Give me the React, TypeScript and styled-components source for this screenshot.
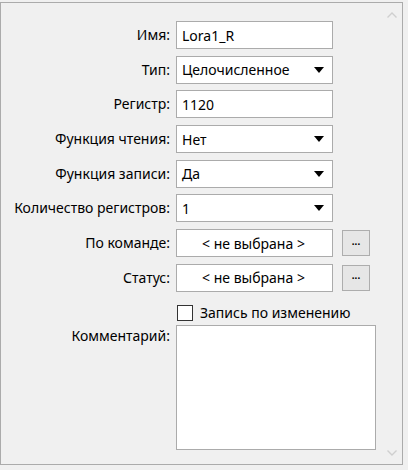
import React from 'react';
import styled, { createGlobalStyle } from 'styled-components';

const GlobalStyle = createGlobalStyle`
	html, body {
		margin: 0;
		padding: 0;
		background: #f0f0f0;
	}
	body {
		font-family: 'Noto Sans', 'Open Sans', sans-serif;
		font-size: 14px;
		color: #000;
	}
`;

type Row = {
	label: string;
	kind: 'text' | 'select' | 'picker';
	value: string;
};

const rows: Row[] = [
	{ label: 'Имя:', kind: 'text', value: 'Lora1_R' },
	{ label: 'Тип:', kind: 'select', value: 'Целочисленное' },
	{ label: 'Регистр:', kind: 'text', value: '1120' },
	{ label: 'Функция чтения:', kind: 'select', value: 'Нет' },
	{ label: 'Функция записи:', kind: 'select', value: 'Да' },
	{ label: 'Количество регистров:', kind: 'select', value: '1' },
	{ label: 'По команде:', kind: 'picker', value: '< не выбрана >' },
	{ label: 'Статус:', kind: 'picker', value: '< не выбрана >' },
];

const Chevron = ({ down }: { down?: boolean }) => (
	<svg width="10" height="6" viewBox="0 0 10 6">
		<path
			d={down ? 'M0.5 0.5 L5 5 L9.5 0.5' : 'M0.5 5.5 L5 1 L9.5 5.5'}
			fill="none"
			stroke="#cfcfcf"
			strokeWidth="1.4"
		/>
	</svg>
);

export default function App() {
	return (
		<>
			<GlobalStyle />
			<Panel>
				<ScrollUp>
					<Chevron />
				</ScrollUp>
				<Form>
					{rows.map((row) => (
						<React.Fragment key={row.label}>
							<Label>{row.label}</Label>
							<Field $centered={row.kind === 'picker'}>
								<span>{row.value}</span>
								{row.kind === 'select' && <Arrow />}
							</Field>
							{row.kind === 'picker' ? <DotsButton>...</DotsButton> : <span />}
						</React.Fragment>
					))}
					<span />
					<CheckRow>
						<Box />
						<span>Запись по изменению</span>
					</CheckRow>
					<CommentLabel>Комментарий:</CommentLabel>
					<Comment />
				</Form>
				<ScrollDown>
					<Chevron down />
				</ScrollDown>
			</Panel>
		</>
	);
}

const Panel = styled.div`
	position: relative;
	box-sizing: border-box;
	width: 403px;
	height: 463px;
	margin-top: 2px;
	border: 1px solid #ababab;
	background: #f0f0f0;
`;

const ScrollUp = styled.div`
	position: absolute;
	top: 9px;
	right: 5px;
	display: flex;
`;

const ScrollDown = styled.div`
	position: absolute;
	bottom: 8px;
	right: 5px;
	display: flex;
`;

const Form = styled.div`
	display: grid;
	grid-template-columns: 169px 157px 31px;
	grid-auto-rows: 28px;
	column-gap: 6px;
	row-gap: 6.7px;
	padding-top: 18px;
`;

const Label = styled.div`
	display: flex;
	align-items: center;
	justify-content: flex-end;
	white-space: nowrap;
	line-height: 1;
`;

const Field = styled.div<{ $centered?: boolean }>`
	box-sizing: border-box;
	display: flex;
	align-items: center;
	justify-content: ${(p) => (p.$centered ? 'center' : 'space-between')};
	padding: 0 7px 0 5px;
	background: #fff;
	border: 1px solid #ababab;
	white-space: nowrap;
`;

const Arrow = styled.i`
	width: 0;
	height: 0;
	border-left: 5px solid transparent;
	border-right: 5px solid transparent;
	border-top: 6px solid #000;
	margin-right: 1px;
`;

const DotsButton = styled.div`
	box-sizing: border-box;
	align-self: center;
	width: 28px;
	height: 26px;
	margin-left: 3px;
	display: flex;
	align-items: center;
	justify-content: center;
	background: #e6e6e6;
	border: 1px solid #adadad;
	font-family: 'Liberation Sans', sans-serif;
	font-size: 10px;
	font-weight: bold;
	letter-spacing: 0;
	padding-bottom: 4px;
`;

const CheckRow = styled.label`
	display: flex;
	align-items: center;
	gap: 7px;
	padding-left: 1px;
	white-space: nowrap;
	height: 22px;
	align-self: center;
	grid-column: span 2;
`;

const Box = styled.span`
	box-sizing: border-box;
	width: 16px;
	height: 16px;
	border: 1px solid #333;
	background: #fff;
	flex: none;
`;

const CommentLabel = styled.div`
	text-align: right;
	padding-top: 3px;
	line-height: 1.2;
	margin-top: -8px;
`;

const Comment = styled.div`
	box-sizing: border-box;
	grid-column: span 2;
	width: 200px;
	height: 125px;
	margin-top: -8px;
	background: #fff;
	border: 1px solid #ababab;
`;
